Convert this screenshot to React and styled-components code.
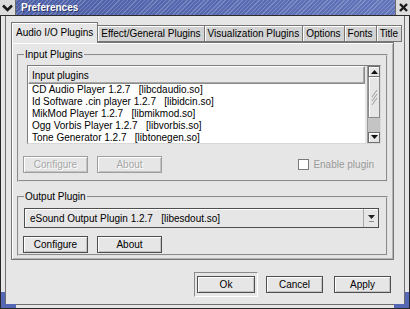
import React from 'react';
import styled, { createGlobalStyle } from 'styled-components';

const GlobalStyle = createGlobalStyle`
  html, body {
    margin: 0;
    padding: 0;
    background: #e6e6e6;
  }
  * {
    box-sizing: border-box;
  }
`;

const FONT = `"Liberation Sans", Arial, "DejaVu Sans", sans-serif`;

const Window = styled.div`
  position: relative;
  width: 410px;
  height: 309px;
  display: flex;
  flex-direction: column;
  background: #e6e6e6;
  font-family: ${FONT};
  font-size: 10px;
  color: #000;
  overflow: hidden;
`;

const TitleBar = styled.div`
  height: 16px;
  flex-shrink: 0;
  display: flex;
  align-items: stretch;
  border-bottom: 1px solid #2c2c2c;
  background:
    repeating-linear-gradient(135deg, rgba(255,255,255,0.2) 0 1px, transparent 1px 3px),
    linear-gradient(90deg, #4c5ea6, #6375bb);
`;

const TitleButton = styled.div`
  width: ${p => p.w}px;
  display: flex;
  align-items: center;
  justify-content: center;
  background: #dcdcdc;
  border-right: ${p => (p.left ? '1px solid #6a6a6a' : 'none')};
  border-left: ${p => (p.left ? 'none' : '1px solid #6a6a6a')};
`;

const Title = styled.div`
  flex: 1;
  padding-left: 5px;
  line-height: 15px;
  font-weight: bold;
  font-size: 10px;
  color: #fff;
  text-shadow: 1px 1px 0 #2a3566;
`;

const Frame = styled.div`
  flex: 1;
  min-height: 0;
  display: flex;
  border: 1px solid #262626;
  border-top: none;
  padding: 0 4px 3px 4px;
`;

const Inner = styled.div`
  flex: 1;
  min-width: 0;
  display: flex;
  flex-direction: column;
  border: 1px solid #6e6e6e;
  border-top: none;
  padding: 6px 5px 5px 5px;
`;

const Corner = styled.div`
  position: absolute;
  bottom: 1px;
  ${p => (p.right ? 'right: 1px;' : 'left: 1px;')}
  width: 15px;
  height: 16px;
  border-bottom: 4px solid #5467b4;
  ${p => (p.right ? 'border-right: 4px solid #5467b4;' : 'border-left: 4px solid #5467b4;')}
`;

const TabRow = styled.div`
  display: flex;
  align-items: flex-end;
  height: 20px;
  position: relative;
  z-index: 1;
`;

const Tab = styled.div`
  height: ${p => (p.active ? 21 : 17)}px;
  margin-bottom: ${p => (p.active ? -1 : 0)}px;
  margin-left: ${p => (p.first ? 0 : -1)}px;
  padding: ${p => (p.active ? '0 4px 2px 4px' : '0 3px')};
  display: flex;
  align-items: center;
  white-space: nowrap;
  background: ${p => (p.active ? '#e6e6e6' : '#d3d3d3')};
  border: 1px solid #767676;
  border-bottom: ${p => (p.active ? 'none' : '1px solid #767676')};
  box-shadow: inset 1px 1px 0 #ffffff;
  position: ${p => (p.active ? 'relative' : 'static')};
  z-index: ${p => (p.active ? 2 : 0)};
`;

const Panel = styled.div`
  margin-right: 5px;
  height: 218px;
  border: 1px solid #767676;
  box-shadow: inset 1px 1px 0 #ffffff, inset -1px -1px 0 #b4b4b4;
  padding: 5px 5px 1px 5px;
  display: flex;
  flex-direction: column;
`;

const Group = styled.fieldset`
  margin: ${p => (p.gap ? '8px' : '0')} 0 0 0;
  padding: ${p => (p.pad || '4px 5px 7px 4px')};
  border: 2px groove #e0e0e0;
  min-width: 0;
  display: flex;
  flex-direction: column;
`;

const Legend = styled.legend`
  padding: 0 1px;
  margin-left: 1px;
  line-height: 13px;
`;

const ListBox = styled.div`
  margin-left: 4px;
  height: 79px;
  display: flex;
  border: 1px solid #7d7d7d;
  border-right-color: #d8d8d8;
  border-bottom-color: #d8d8d8;
  background: #fff;
`;

const ListCol = styled.div`
  flex: 1;
  display: flex;
  flex-direction: column;
  overflow: hidden;
  border-right: 2px solid #e6e6e6;
`;

const Header = styled.div`
  height: 18px;
  flex-shrink: 0;
  padding-left: 3px;
  display: flex;
  align-items: center;
  background: #e6e6e6;
  border: 1px solid #8a8a8a;
  border-top-color: #ffffff;
  border-left-color: #ffffff;
  box-shadow: inset -1px -1px 0 #a8a8a8;
`;

const Row = styled.div`
  height: 12px;
  line-height: 12px;
  padding-left: 4px;
  white-space: pre;
  flex-shrink: 0;
`;

const ScrollBar = styled.div`
  width: 13px;
  display: flex;
  flex-direction: column;
  background: #cfcfcf;
  border-left: 1px solid #9a9a9a;
`;

const ScrollBtn = styled.div`
  height: 11px;
  display: flex;
  align-items: center;
  justify-content: center;
  background: #e6e6e6;
  border: 1px solid #6e6e6e;
  box-shadow: inset 1px 1px 0 #fff;
`;

const Thumb = styled.div`
  height: 41px;
  display: flex;
  align-items: center;
  justify-content: center;
  background: #e6e6e6;
  border: 1px solid #8a8a8a;
  border-top: none;
  box-shadow: inset 1px 1px 0 #fff;
`;

const Trough = styled.div`
  flex: 1;
  background: #c4c4c4;
`;

const ButtonLine = styled.div`
  display: flex;
  align-items: center;
  gap: 9px;
  margin-top: ${p => p.mt}px;
`;

const Button = styled.button`
  width: ${p => p.w || 65}px;
  height: 17px;
  padding: 0;
  margin: 0;
  font-family: ${FONT};
  font-size: 10px;
  color: ${p => (p.disabled ? '#a6a6a6' : '#000')};
  background: #e6e6e6;
  border: 1px solid ${p => (p.disabled ? '#9e9e9e' : '#4e4e4e')};
  box-shadow: inset 1px 1px 0 #fff, inset -1px -1px 0 #c2c2c2;
  text-shadow: ${p => (p.disabled ? '1px 1px 0 #fff' : 'none')};
`;

const Check = styled.label`
  margin-left: auto;
  margin-right: 7px;
  display: flex;
  align-items: center;
  gap: 4px;
  color: #9a9a9a;
`;

const CheckBox = styled.span`
  width: 11px;
  height: 11px;
  background: #fff;
  border: 1px solid #7a7a7a;
`;

const Combo = styled.div`
  margin-left: 1px;
  margin-right: 2px;
  height: 20px;
  display: flex;
  border: 1px solid #4e4e4e;
  background: #e6e6e6;
  box-shadow: inset 1px 1px 0 #fff;
`;

const ComboText = styled.div`
  flex: 1;
  padding-left: 5px;
  display: flex;
  align-items: center;
  white-space: pre;
`;

const ComboArrow = styled.div`
  width: 15px;
  display: flex;
  align-items: center;
  justify-content: center;
  border-left: 1px solid #a8a8a8;
`;

const ActionRow = styled.div`
  display: flex;
  justify-content: flex-end;
  gap: 5px;
  margin-top: 12px;
  margin-right: 5px;
`;

const Slot = styled.div`
  padding: 3px 2px;
  border: 1px solid ${p => (p.def ? '#8a8a8a' : 'transparent')};
  border-right-color: ${p => (p.def ? '#fff' : 'transparent')};
  border-bottom-color: ${p => (p.def ? '#fff' : 'transparent')};
`;

const Arrow = ({ up }) => (
  <svg width="7" height="5" viewBox="0 0 7 5">
    <path d={up ? 'M0 5 L3.5 1 L7 5 Z' : 'M0 0 L3.5 4 L7 0 Z'} fill="#111" />
  </svg>
);

const plugins = [
  'CD Audio Player 1.2.7   [libcdaudio.so]',
  'Id Software .cin player 1.2.7   [libidcin.so]',
  'MikMod Player 1.2.7   [libmikmod.so]',
  'Ogg Vorbis Player 1.2.7   [libvorbis.so]',
  'Tone Generator 1.2.7   [libtonegen.so]',
  'WAV Player 1.2.7   [libwav.so]',
];

const tabs = ['Audio I/O Plugins', 'Effect/General Plugins', 'Visualization Plugins', 'Options', 'Fonts', 'Title'];

const App = () => {
  return (
    <>
      <GlobalStyle />
      <Window>
        <TitleBar>
          <TitleButton w={16} left>
            <svg width="11" height="8" viewBox="0 0 11 8">
              <path d="M1 1.5 L5.5 6 L10 1.5" stroke="#1a1a1a" strokeWidth="2.6" fill="none" />
            </svg>
          </TitleButton>
          <Title>Preferences</Title>
          <TitleButton w={15}>
            <svg width="9" height="9" viewBox="0 0 9 9">
              <path d="M1 1 L8 8 M8 1 L1 8" stroke="#1a1a1a" strokeWidth="2.4" />
            </svg>
          </TitleButton>
        </TitleBar>
        <Frame>
          <Inner>
            <TabRow>
              {tabs.map((t, i) => (
                <Tab key={t} active={i === 0} first={i === 0}>{t}</Tab>
              ))}
            </TabRow>
            <Panel>
              <Group>
                <Legend>Input Plugins</Legend>
                <ListBox>
                  <ListCol>
                    <Header>Input plugins</Header>
                    {plugins.map(p => (
                      <Row key={p}>{p}</Row>
                    ))}
                  </ListCol>
                  <ScrollBar>
                    <ScrollBtn><Arrow up /></ScrollBtn>
                    <Thumb>
                      <svg width="7" height="18" viewBox="0 0 7 18">
                        <path d="M1 9 L6 2 M1 13 L6 6 M1 17 L6 10" stroke="#9a9a9a" strokeWidth="1" />
                      </svg>
                    </Thumb>
                    <Trough />
                    <ScrollBtn><Arrow /></ScrollBtn>
                  </ScrollBar>
                </ListBox>
                <ButtonLine mt={12}>
                  <Button disabled>Configure</Button>
                  <Button disabled>About</Button>
                  <Check>
                    <CheckBox />
                    Enable plugin
                  </Check>
                </ButtonLine>
              </Group>
              <Group gap pad="5px 5px 1px 4px">
                <Legend>Output Plugin</Legend>
                <Combo>
                  <ComboText>eSound Output Plugin 1.2.7   [libesdout.so]</ComboText>
                  <ComboArrow>
                    <svg width="7" height="9" viewBox="0 0 7 9">
                      <path d="M0 1 L3.5 5 L7 1 Z" fill="#222" />
                      <path d="M1 7.5 H6" stroke="#8a8a8a" strokeWidth="1" />
                    </svg>
                  </ComboArrow>
                </Combo>
                <ButtonLine mt={8}>
                  <Button>Configure</Button>
                  <Button>About</Button>
                </ButtonLine>
              </Group>
            </Panel>
            <ActionRow>
              <Slot def><Button w={58}>Ok</Button></Slot>
              <Slot><Button w={57}>Cancel</Button></Slot>
              <Slot><Button w={57}>Apply</Button></Slot>
            </ActionRow>
          </Inner>
        </Frame>
        <Corner />
        <Corner right />
      </Window>
    </>
  );
};

export default App;
